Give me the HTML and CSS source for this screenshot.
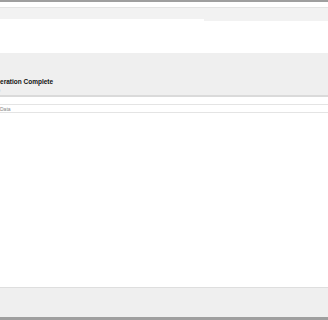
FILE: index.html
```html
<!DOCTYPE html>
<html lang="en">
<head>
  <meta charset="UTF-8">
  <title>Operation Complete</title>
  <link rel="stylesheet" href="styles.css">
</head>
<body>
  <div class="window">
    <div class="top-bar"></div>
    <div class="tab-strip">
      <div class="tab active"></div>
    </div>
    <div class="spacer"></div>
    <div class="header">
      <h2>Operation Complete</h2>
      <div class="subtitle">Info</div>
    </div>
    <div class="table">
      <div class="row">Data</div>
    </div>
    <div class="content"></div>
    <div class="footer"></div>
    <div class="bottom-bar"></div>
  </div>
</body>
</html>
```

FILE: styles.css
```css
html, body {
  margin: 0;
  padding: 0;
  height: 100%;
  background: #fff;
  font-family: "Liberation Sans", Arial, sans-serif;
}

.window {
  display: flex;
  flex-direction: column;
  height: 320px;
  overflow: hidden;
}

.top-bar {
  height: 2px;
  background-color: #9f9f9f;
  margin-bottom: 5px;
}

.tab-strip {
  height: 13px;
  background-color: #f2f2f2;
  border-top: 1px solid #e4e4e4;
  display: flex;
  align-items: flex-end;
}

.tab.active {
  width: 204px;
  height: 2px;
  background-color: #fff;
}

.spacer {
  height: 32px;
}

.header {
  height: 42px;
  background-color: #efefef;
  border-bottom: 2px solid #dadada;
  display: flex;
  flex-direction: column;
  justify-content: flex-end;
}

h2 {
  margin: 0 0 0 -9px;
  font-size: 6.5px;
  font-weight: bold;
  color: #111;
  line-height: 8px;
}

.subtitle {
  margin: 1px 0 2px -8px;
  font-size: 5px;
  line-height: 6px;
  color: #bbb;
}

.table {
  margin-top: 7px;
  border-top: 1px solid #e4e4e4;
}

.row {
  height: 6px;
  padding-top: 1px;
  line-height: 7px;
  font-size: 5px;
  color: #888;
  border-bottom: 1px solid #e4e4e4;
}

.content {
  flex: 1;
}

.footer {
  height: 29px;
  background-color: #efefef;
  border-top: 1px solid #dedede;
}

.bottom-bar {
  height: 3px;
  background-color: #9f9f9f;
}
```
